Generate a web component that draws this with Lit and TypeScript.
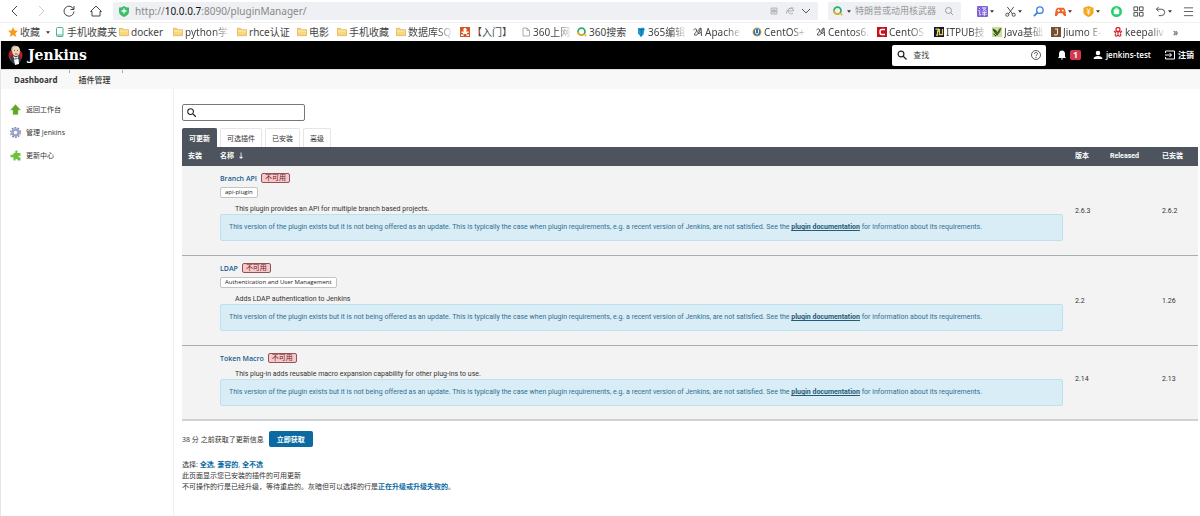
import { LitElement, html, css, nothing } from "lit";
import { customElement } from "lit/decorators.js";

const caret = html`<svg class="caret" viewBox="0 0 6 4"><path d="M0 0h6L3 4z" fill="#333" /></svg>`;

const folder = html`<svg class="i" viewBox="0 0 22 22"><path d="M1 3h7l2 3h11v13H1z" fill="#f9d77e" stroke="#dcae4a" stroke-width="1.6" /><path d="M2 9h18" stroke="#fdeab4" stroke-width="2" /></svg>`;

const icons: Record<string, unknown> = {
  folder,
  star: html`<svg class="i" viewBox="0 0 20 20"><path d="M10 0l3 7 7 .6-5.400 4.800L16.500 20 10 16l-6.500 4 1.900-7.600L0 7.600 7 7z" fill="#f79a1c" /></svg>`,
  phone: html`<svg class="i" viewBox="0 0 20 20"><rect x="3" y="1" width="13" height="18" rx="2" fill="#fff" stroke="#4bb584" stroke-width="2" /><path d="M3 16h13" stroke="#4bb584" stroke-width="2" /></svg>`,
  person: html`<svg class="i" viewBox="0 0 20 20"><rect width="20" height="20" fill="#d9531e" /><path d="M10 2c3 0 4 3 3 5l-1 2h5v3h-3v3h4v3h-5v-4H7v4H2v-3h4v-3H3V9h5L7 7c-1-2 0-5 3-5z" fill="#fff" /></svg>`,
  page: html`<svg class="i" viewBox="0 0 20 20"><path d="M4 2h8l5 5v11H4z M12 2v5h5" fill="#fff" stroke="#999" stroke-width="1.600" /></svg>`,
  search360: html`<svg class="i" viewBox="0 0 20 20"><circle cx="9" cy="9" r="7" fill="none" stroke="#27b06a" stroke-width="3.500" /><path d="M2 9a7 7 0 0 0 12 5" fill="none" stroke="#f6a623" stroke-width="3.500" /><circle cx="17" cy="17" r="2" fill="#f6a623" /></svg>`,
  edit: html`<svg class="i" viewBox="0 0 20 20"><path d="M4 3l11-2 2 4-2 10-5 5-6-7z" fill="#1b9ad6" /><path d="M4 3l7 3 6-2M11 6l-1 13" stroke="#0b5a8c" stroke-width="1.500" fill="none" /></svg>`,
  scribble: html`<svg class="i" viewBox="0 0 20 20"><path d="M1 6c3-4 8-2 6 2-1 4-5 5-4 8 4 2 10-3 12-14-6 4-7 10-3 11 2 0 3-1 4-3M16 2l1 16" stroke="#444" stroke-width="1.900" fill="none" /></svg>`,
  ubadge: html`<svg class="i" viewBox="0 0 20 20"><circle cx="10" cy="10" r="9" fill="#e9a33a" /><circle cx="10" cy="10" r="7" fill="#2874b8" /><path d="M7 5v6a3 3 0 0 0 6 0V5" stroke="#fff" stroke-width="2" fill="none" /></svg>`,
  cred: html`<svg class="i" viewBox="0 0 20 20"><rect width="20" height="20" fill="#c8101c" /><path d="M16 5H9c-4 0-4 10 0 10h7" stroke="#fff" stroke-width="3" fill="none" /></svg>`,
  itpub: html`<svg class="i" viewBox="0 0 20 20"><rect width="20" height="20" fill="#15153a" /><path d="M3 4h6v4H7v8H4M11 4v11h6V4" stroke="#e5d94b" stroke-width="2.500" fill="none" /></svg>`,
  java: html`<svg class="i" viewBox="0 0 20 20"><rect width="20" height="20" fill="#cfdc9a" /><path d="M1 3l7 3 3 4 4-7 4-1-3 8-6 8-5-6z" fill="#3c6b1e" /><path d="M3 14l5 4M2 4l4 6" stroke="#222" stroke-width="2" /></svg>`,
  jiumo: html`<svg class="i" viewBox="0 0 20 20"><rect width="20" height="20" fill="#70503a" /><path d="M8 4h5v9c0 4-6 4-6 1" stroke="#f2e3cf" stroke-width="2.200" fill="none" /></svg>`,
  keep: html`<svg class="i" viewBox="0 0 20 20"><circle cx="10" cy="5" r="4" fill="none" stroke="#d9232e" stroke-width="2.600" /><path d="M3 11c5-3 9-3 14 0M10 9v6M6 13c-5 5 2 7 4 3 2 4 9 2 4-3M2 8l4 3M18 8l-4 3" stroke="#d9232e" stroke-width="2.200" fill="none" /></svg>`,
};

interface Bookmark { icon: string; text: string; w: number; menu?: boolean; fade?: boolean }
const bookmarks: Bookmark[] = [
  { icon: "star", text: "收藏", w: 47, menu: true },
  { icon: "phone", text: "手机收藏夹", w: 64 },
  { icon: "folder", text: "docker", w: 54 },
  { icon: "folder", text: "python学", w: 64, fade: true },
  { icon: "folder", text: "rhce认证", w: 60 },
  { icon: "folder", text: "电影", w: 40 },
  { icon: "folder", text: "手机收藏", w: 59 },
  { icon: "folder", text: "数据库SQ", w: 64, fade: true },
  { icon: "person", text: "【入门】", w: 61 },
  { icon: "page", text: "360上网", w: 56, fade: true },
  { icon: "search360", text: "360搜索", w: 59 },
  { icon: "edit", text: "365编辑", w: 57, fade: true },
  { icon: "scribble", text: "Apache", w: 59, fade: true },
  { icon: "ubadge", text: "CentOS+", w: 64, fade: true },
  { icon: "scribble", text: "Centos6.", w: 61, fade: true },
  { icon: "cred", text: "CentOS", w: 57, fade: true },
  { icon: "itpub", text: "ITPUB技", w: 58, fade: true },
  { icon: "java", text: "Java基础", w: 59, fade: true },
  { icon: "jiumo", text: "Jiumo E-", w: 62, fade: true },
  { icon: "keep", text: "keepaliv", w: 60, fade: true },
];

interface Plugin { name: string; label?: string; about: string; version: string; installed: string }
const plugins: Plugin[] = [
  { name: "Branch API", label: "api-plugin", about: "This plugin provides an API for multiple branch based projects.", version: "2.6.3", installed: "2.6.2" },
  { name: "LDAP", label: "Authentication and User Management", about: "Adds LDAP authentication to Jenkins", version: "2.2", installed: "1.26" },
  { name: "Token Macro", about: "This plug-in adds reusable macro expansion capability for other plug-ins to use.", version: "2.14", installed: "2.13" },
];

const base = css`
  * { box-sizing: border-box; }
  a { text-decoration: none; color: inherit; }
  button { font: inherit; color: inherit; border: 0; background: none; padding: 0; display: flex; align-items: center; gap: 2px; }
  input { font: inherit; color: inherit; border: 0; outline: 0; background: none; padding: 0; min-width: 0; flex: 1; }
  svg { display: block; flex: none; }
`;

@customElement("browser-bar")
export class BrowserBar extends LitElement {
  static styles = [base, css`
    :host { display: block; font: 10px/14px "Noto Sans", "Noto Sans CJK SC", sans-serif; color: #444; background: #fff; }
    .bar { display: flex; align-items: center; height: 22px; padding: 0 6px 0 9px; }
    .nav { display: flex; gap: 15px; width: 104px; }
    .nav svg { width: 12px; height: 12px; }
    .tools .t { width: 11px; height: 11px; }
    .address { flex: 1; display: flex; align-items: center; height: 18px; background: #eef0f3; border-radius: 2px; padding: 0 8px 0 6px; gap: 8px; }
    .url { flex: 1; color: #888; }
    .url b { color: #111; font-weight: 400; }
    .shield { width: 10px; height: 11px; margin-right: -2px; }
    .small { width: 8px; height: 8px; }
    .query { display: flex; align-items: center; gap: 4px; width: 133px; height: 18px; background: #eef0f3; border-radius: 2px; margin: 0 16px 0 10px; padding: 0 8px 0 5px; font-size: 9px; }
    .query input { color: #888; }
    .query input::placeholder { color: #999; opacity: 1; }
    .caret { width: 4px; height: 3px; }
    .tools { display: flex; align-items: center; gap: 11px; }
    .marks { display: flex; height: 19px; border-top: 1px solid #f0f0f0; padding-left: 8px; align-items: center; }
    .mark { flex: none; display: flex; align-items: center; gap: 2px; }
    .label { white-space: nowrap; }
    .fade { mask-image: linear-gradient(90deg, #000 calc(100% - 14px), rgba(0, 0, 0, .15)); }
    .i { width: 10px; height: 10px; }
    .mark .caret { margin-left: 4px; }
  `];

  render() {
    return html`
      <div class="bar">
        <nav class="nav">
          <button aria-label="后退"><svg viewBox="0 0 12 12"><path d="M8 1L3 6l5 5" fill="none" stroke="#444" /></svg></button>
          <button aria-label="前进"><svg viewBox="0 0 12 12"><path d="M3 1l5 5-5 5" fill="none" stroke="#ccc" /></svg></button>
          <button aria-label="刷新"><svg viewBox="0 0 12 12"><path d="M10.500 4A5 5 0 1 0 11 6.500M11 1v3.500H7.500" fill="none" stroke="#444" /></svg></button>
          <button aria-label="主页"><svg viewBox="0 0 12 12"><path d="M.5 6.500L6 1l5.500 5.500H10V11H2V6.500z" fill="none" stroke="#444" /></svg></button>
        </nav>
        <div class="address">
          <svg class="shield" viewBox="0 0 20 22"><path d="M10 0c3 2 6 3 10 3v8c0 6-5 9-10 11C5 20 0 17 0 11V3c4 0 7-1 10-3z" fill="#3dbd6c" /><path d="M10 5v10M5 10h10" stroke="#fff" stroke-width="2.600" /></svg>
          <span class="url">http://<b>10.0.0.7</b>:8090/pluginManager/</span>
          <svg class="small" viewBox="0 0 16 16"><path d="M2 2h12v5H2zM2 9h12v5H2zM5 4.500h6M5 11.500h6" fill="none" stroke="#999" stroke-width="1.300" /></svg>
          <svg class="small" viewBox="0 0 16 16"><path d="M4 8h11c0-7-8-7-10-3-3 6 2 10 9 8M1 13C0 6 8 1 15 2" fill="none" stroke="#999" stroke-width="1.500" /></svg>
          <svg class="small" viewBox="0 0 8 8"><path d="M0 2l4 4 4-4" fill="none" stroke="#555" /></svg>
        </div>
        <label class="query">${icons.search360}${caret}<input aria-label="搜索" placeholder="特朗普或动用核武器" />
          <svg class="small" viewBox="0 0 8 8"><circle cx="3.500" cy="3.500" r="3" fill="none" stroke="#888" stroke-width=".8" /><path d="M5.600 5.600L8 8" stroke="#888" stroke-width=".8" /></svg></label>
        <div class="tools">
          <button aria-label="翻译"><svg class="t" viewBox="0 0 12 12"><rect width="12" height="12" rx="1" fill="#8061d6" /><path d="M2 2l1.500 1.500M1.500 5H3v5l1.500-1M5.500 2H10L6 5.500M6 2.500l4.500 3M5.500 7h5M5.500 9h5M8 5.500V11" stroke="#fff" stroke-width=".8" fill="none" /></svg>${caret}</button>
          <button aria-label="截图"><svg class="t" viewBox="0 0 12 12"><path d="M2.500 1l6 8M9.500 1l-6 8" stroke="#444" /><circle cx="2.500" cy="9.500" r="1.700" fill="none" stroke="#444" /><circle cx="9.500" cy="9.500" r="1.700" fill="none" stroke="#444" /></svg>${caret}</button>
          <button aria-label="查找"><svg class="t" viewBox="0 0 12 12"><circle cx="7.500" cy="4.500" r="3.500" fill="none" stroke="#3f83e8" stroke-width="1.500" /><path d="M5 7L1 11" stroke="#3f83e8" stroke-width="2" /></svg></button>
          <button aria-label="游戏"><svg class="t" viewBox="0 0 12 12"><path d="M2.500 2h7C11.500 4 12 7 12 11h-2L8 8H4l-2 3H0c0-4 .5-7 2.500-9z" fill="#f0652b" /><path d="M2.500 5h3M4 3.500v3" stroke="#fff" /><circle cx="8.500" cy="5" r="1" fill="#fff" /></svg>${caret}</button>
          <button aria-label="钱包"><svg class="t" viewBox="0 0 12 12"><path d="M6 0l5.500 2v5c0 2-3 4-5.500 5C3.500 11 .5 9 .5 7V2z" fill="#f5a81c" /><path d="M4 2.500L6 5l2-2.500M6 5v4.500M4 5.500h4M4 7.500h4" stroke="#fff" fill="none" stroke-width=".9" /></svg>${caret}</button>
          <button aria-label="助手"><svg class="t" viewBox="0 0 12 12"><circle cx="6" cy="6" r="6" fill="#25cf6c" /><rect x="3" y="3.500" width="6" height="5.500" rx="1" fill="#fff" /><path d="M4.500 2.500h3" stroke="#fff" /></svg></button>
          <button aria-label="扩展"><svg class="t" viewBox="0 0 12 12"><path d="M1 1h4v4H1zM7 1h4v4H7zM1 7h4v4H1zM7 7h4v4H7z" fill="none" stroke="#444" /></svg></button>
          <button aria-label="撤销"><svg class="t" viewBox="0 0 12 12"><path d="M4 1L1.500 3.500 4 6M1.500 3.500H7a3.500 3.500 0 0 1 0 7H4" fill="none" stroke="#444" /></svg>${caret}</button>
          <button aria-label="菜单"><svg class="t" viewBox="0 0 12 12"><path d="M1 2h10M1 6h10M1 10.500h10" stroke="#555" /></svg></button>
        </div>
      </div>
      <nav class="marks">
        ${bookmarks.map((b) => html`<a class="mark" href="#" style="width:${b.w}px">${icons[b.icon]}<span class="label ${b.fade ? "fade" : ""}">${b.text}</span>${b.menu ? caret : nothing}</a>`)}
        <span>»</span>
      </nav>`;
  }
}

@customElement("jenkins-header")
export class JenkinsHeader extends LitElement {
  static styles = [base, css`
    :host { display: block; font: 8px/12px "Open Sans", "Noto Sans CJK SC", sans-serif; }
    .top { display: flex; align-items: center; height: 28px; background: #000; color: #fff; padding: 0 6px 0 7px; font-weight: 700; }
    .brand { display: flex; align-items: center; gap: 5px; font: 700 14px/20px "DejaVu Serif", serif; margin-right: auto; }
    .butler { width: 15px; height: 20px; }
    .find { display: flex; align-items: center; gap: 6px; width: 154px; height: 21px; border-radius: 2px; background: #fff; color: #333; padding: 0 5px; font-weight: 400; margin-right: 11px; }
    .find input::placeholder { color: #444; opacity: 1; }
    .g { width: 10px; height: 10px; }
    .link { display: flex; align-items: center; gap: 3px; margin-left: 14px; }
    .bell { margin-left: 0; }
    .user { font-weight: 600; margin-left: 12px; }
    .count { background: #d33a4c; border-radius: 2px; padding: 0 3px; line-height: 10px; }
    .crumbs { display: flex; height: 20px; background: #f8f8f8; border-top: 1px solid #ddd; color: #333; padding-left: 13px; font-weight: 700; line-height: 20px; }
    .crumbs a + i + a { font-weight: 500; }
    .tick { width: 1px; height: 3px; background: #aaa; margin: 0 9px 0 11px; }
  `];

  render() {
    return html`
      <header class="top">
        <a class="brand" href="#"><svg class="butler" viewBox="0 0 30 40">
          <path d="M1 20c0-6 3-9 7-10h14c4 2 7 6 7 11s-3 9-6 11H6C3 30 1 25 1 20z" fill="#b5232b" />
          <path d="M5 20l9 4 9-4 3 11-4 6H10L5 31z" fill="#33414f" />
          <path d="M8 10c0-6 3-8 8-8 5 0 8 4 8 9 0 7-3 11-8 11S8 17 8 10z" fill="#efd5b8" />
          <path d="M7 12C5 4 10 1 15 1c-3 3-6 4-6 10z" fill="#c9bda8" />
          <path d="M10 22l6 3 5-3-2 6-3-2-3 2z" fill="#fff" />
          <path d="M12 29l9-1 1 10-8 2z" fill="#fff" />
          <path d="M12 11h2M18 11h2M14 18h5" stroke="#4a3526" stroke-width="1.500" /></svg>Jenkins</a>
        <label class="find"><svg class="g" viewBox="0 0 10 10"><circle cx="4" cy="4" r="2.900" fill="none" stroke="#222" stroke-width="1.200" /><path d="M6 6l3.500 3.500" stroke="#222" stroke-width="1.200" /></svg>
          <input aria-label="查找" placeholder="查找" />
          <svg class="g" viewBox="0 0 20 20"><circle cx="10" cy="10" r="9" fill="none" stroke="#333" stroke-width="1.600" /><path d="M7 8c0-4 6-4 6-.5C13 10 10 9.500 10 12.500M10 14v2" fill="none" stroke="#333" stroke-width="1.800" /></svg></label>
        <a class="link bell" href="#"><svg class="g" viewBox="0 0 20 20"><path d="M10 1c4 0 6 3 6 7v5l2 3H2l2-3V8c0-4 2-7 6-7zM8 17h4c0 3-4 3-4 0z" fill="#fff" /></svg><span class="count">1</span></a>
        <a class="link user" href="#"><svg class="g" viewBox="0 0 20 20"><circle cx="10" cy="6" r="4.500" fill="#fff" /><path d="M1 18c0-8 18-8 18 0z" fill="#fff" /></svg>jenkins-test</a>
        <a class="link" href="#"><svg class="g" viewBox="0 0 20 20"><path d="M1 6V2h18v16H1v-4M0 10h13M9 6l4 4-4 4" fill="none" stroke="#fff" stroke-width="2" /></svg>注销</a>
      </header>
      <nav class="crumbs"><a href="#">Dashboard</a><i class="tick"></i><a href="#">插件管理</a><i class="tick"></i></nav>`;
  }
}

@customElement("plugin-table")
export class PluginTable extends LitElement {
  static styles = [base, css`
    :host { display: block; font-family: Roboto, "Noto Sans CJK SC", sans-serif; }
    table { width: 100%; border-collapse: separate; border-spacing: 0; table-layout: fixed; }
    .c1 { width: 32px; } .c3 { width: 35px; } .c4 { width: 52px; } .c5 { width: 42px; }
    th { background: #4d545d; color: #fff; text-align: left; height: 19px; padding: 0 6px; font-weight: 700; white-space: nowrap; }
    td { background: #f3f3f3; padding: 6px 6px 14px; border-bottom: 1px solid #a9adb0; vertical-align: top; }
    .num { vertical-align: middle; padding: 7px 6px 6px; }
    tr:last-child td { border-bottom: 2px solid #d0d3d4; padding-bottom: 13px; }
    .title { display: flex; align-items: center; gap: 4px; height: 12px; color: #17608f; font-weight: 600; font-family: "Open Sans", "Noto Sans CJK SC", sans-serif; }
    .off { border: 1px solid #8e5458; border-radius: 2px; background: #f8c9cb; color: #6b2024; padding: 0 3px; font-weight: 400; line-height: 8px; }
    .chip { display: block; width: fit-content; margin-top: 3px; border: 1px solid #c4c4c4; border-radius: 2px; background: #fff; color: #222; padding: 0 4px; font-size: 6px; line-height: 9px; font-family: "Open Sans", sans-serif; }
    .about { margin: 5px 0 0 15px; line-height: 10px; }
    .chip + .about { margin-top: 6px; }
    .alert { border: 1px solid #bce0ec; border-radius: 2px; background: #d9edf7; color: #31708f; padding: 7px 8px; line-height: 11px; }
    .alert a { font-weight: 700; text-decoration: underline; color: #245a73; }
  `];

  render() {
    return html`<table>
      <colgroup><col class="c1" /><col /><col class="c3" /><col class="c4" /><col class="c5" /></colgroup>
      <thead><tr><th>安装</th><th>名称&nbsp; ↓</th><th>版本</th><th>Released</th><th>已安装</th></tr></thead>
      <tbody>${plugins.map((p) => html`<tr>
        <td></td>
        <td>
          <div class="title"><a href="#">${p.name}</a><span class="off">不可用</span></div>
          ${p.label ? html`<a class="chip" href="#">${p.label}</a>` : nothing}
          <div class="about">${p.about}</div>
          <div class="alert">This version of the plugin exists but it is not being offered as an update. This is typically the case when plugin requirements, e.g. a recent version of Jenkins, are not satisfied. See the <a href="#">plugin documentation</a> for information about its requirements.</div>
        </td>
        <td class="num">${p.version}</td><td></td><td class="num">${p.installed}</td>
      </tr>`)}</tbody></table>`;
  }
}

@customElement("app-root")
export class AppRoot extends LitElement {
  static styles = [base, css`
    :host { display: flex; flex-direction: column; min-height: 100vh; background: #fff; font: 7px/11px "Open Sans", "Noto Sans CJK SC", sans-serif; color: #333; }
    .page { flex: 1; display: flex; flex-direction: column; border-left: 1px solid #e6e6e8; }
    .body { flex: 1; display: flex; }
    .side { width: 173px; border-right: 1px solid #efefef; padding: 14px 9px; display: flex; flex-direction: column; gap: 11px; }
    .task { display: flex; align-items: center; gap: 5px; height: 12px; }
    .task svg { width: 11px; height: 11px; }
    .main { flex: 1; min-width: 0; padding: 15px 2px 20px 8px; }
    .filter { display: flex; align-items: center; gap: 4px; width: 123px; height: 17px; border: 1px solid #777; border-radius: 2px; padding: 0 4px; }
    .filter svg { width: 9px; height: 9px; }
    .tabs { display: flex; gap: 3px; margin-top: 7px; }
    .tab { height: 19px; padding: 0 6px; border: 1px solid #e6e6e6; border-bottom: 0; border-radius: 2px 2px 0 0; background: #fff; }
    .tab.on { background: #4d545d; border-color: #4d545d; color: #fff; font-weight: 700; }
    .fetch { display: flex; align-items: center; gap: 5px; margin: 10px 0 12px; }
    .primary { background: #0b6aa2; color: #fff; border-radius: 2px; height: 16px; padding: 0 8px; font-weight: 700; }
    p { margin: 0; }
    .go { color: #0b6aa2; font-weight: 700; }
  `];

  render() {
    return html`
      <browser-bar></browser-bar>
      <div class="page">
        <jenkins-header></jenkins-header>
        <div class="body">
          <nav class="side">
            <a class="task" href="#"><svg viewBox="0 0 22 22"><path d="M11 1l10 11h-5v9H6v-9H1z" fill="#5fa529" stroke="#8dc75a" /></svg>返回工作台</a>
            <a class="task" href="#"><svg viewBox="0 0 22 22"><circle cx="11" cy="11" r="9.500" fill="none" stroke="#8288a8" stroke-width="3" stroke-dasharray="3.500 2.470" /><circle cx="11" cy="11" r="6" fill="none" stroke="#9aa3cc" stroke-width="5" /></svg>管理 Jenkins</a>
            <a class="task" href="#"><svg viewBox="0 0 22 22"><path d="M1 10c3-2 4 1 6-1V6h4C8 1 16-1 15 4l-1 2h7v6c-5-2-5 4 0 3v6h-6c1-4-5-4-4 0H7v-6c-2-2-3 1-6-1z" fill="#6cc13a" /></svg>更新中心</a>
          </nav>
          <main class="main">
            <label class="filter"><svg viewBox="0 0 10 10"><circle cx="4" cy="4" r="3.200" fill="none" stroke="#222" stroke-width="1.200" /><path d="M6.500 6.500L10 10" stroke="#222" stroke-width="1.400" /></svg><input aria-label="过滤" /></label>
            <div class="tabs">
              <button class="tab on">可更新</button><button class="tab">可选插件</button><button class="tab">已安装</button><button class="tab">高级</button>
            </div>
            <plugin-table></plugin-table>
            <div class="fetch"><span>38 分 之前获取了更新信息</span><button class="primary">立即获取</button></div>
            <p>选择: <a class="go" href="#">全选</a>, <a class="go" href="#">兼容的</a>, <a class="go" href="#">全不选</a></p>
            <p>此页面显示您已安装的插件的可用更新</p>
            <p>不可操作的行是已经升级，等待重启的。灰暗但可以选择的行是<a class="go" href="#">正在升级或升级失败的</a>。</p>
          </main>
        </div>
      </div>`;
  }
}
